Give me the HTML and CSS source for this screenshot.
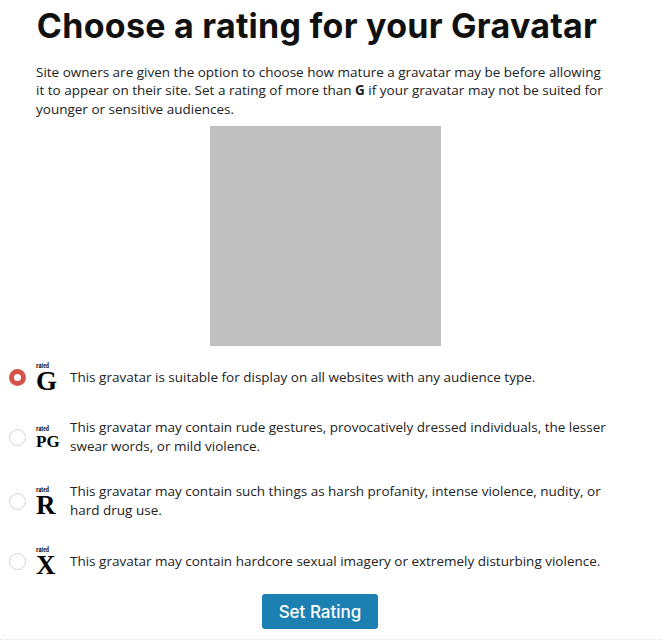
FILE: index.html
```html
<!DOCTYPE html>
<html>
<head>
<meta charset="utf-8">
<link rel="stylesheet" href="styles.css">
</head>
<body>
<div class="page">
  <h1 class="title">Choose a rating for your Gravatar</h1>
  <p class="intro">Site owners are given the option to choose how mature a gravatar may be before allowing it to appear on their site. Set a rating of more than <b>G</b> if your gravatar may not be suited for younger or sensitive audiences.</p>
  <div class="preview"></div>
  <div class="options">
    <label class="option">
      <span class="radio checked"></span>
      <span class="badge"><span class="rated">rated</span><span class="letter">G</span></span>
      <span class="desc">This gravatar is suitable for display on all websites with any audience type.</span>
    </label>
    <label class="option">
      <span class="radio"></span>
      <span class="badge"><span class="rated">rated</span><span class="letter small">PG</span></span>
      <span class="desc">This gravatar may contain rude gestures, provocatively dressed individuals, the lesser swear words, or mild violence.</span>
    </label>
    <label class="option">
      <span class="radio"></span>
      <span class="badge"><span class="rated">rated</span><span class="letter">R</span></span>
      <span class="desc">This gravatar may contain such things as harsh profanity, intense violence, nudity, or hard drug use.</span>
    </label>
    <label class="option">
      <span class="radio"></span>
      <span class="badge"><span class="rated">rated</span><span class="letter">X</span></span>
      <span class="desc">This gravatar may contain hardcore sexual imagery or extremely disturbing violence.</span>
    </label>
  </div>
  <div class="actions">
    <button class="btn">Set Rating</button>
  </div>
</div>
</body>
</html>
```
FILE: styles.css
```css
html, body {
  margin: 0;
  padding: 0;
  background: #fff;
}
body {
  font-family: "Open Sans", "Liberation Sans", sans-serif;
  color: #222;
}
.page {
  width: 662px;
  height: 640px;
  box-sizing: border-box;
  padding-top: 5px;
  overflow: hidden;
  border-bottom: 1px dotted #e6e6e6;
}
.title {
  margin: 0 0 0 32px;
  width: 570px;
  text-align: center;
  font-family: Inter, "Liberation Sans", sans-serif;
  font-weight: 700;
  font-size: 34px;
  line-height: 42px;
  letter-spacing: 0.25px;
  color: #111;
}
.intro {
  margin: 16px 0 0 36px;
  width: 568px;
  font-size: 13.5px;
  line-height: 18.4px;
  color: #222;
}
.intro b {
  display: inline-block;
  font-weight: 700;
  line-height: 18.4px;
}
.preview {
  width: 231px;
  height: 220px;
  margin: 8px 0 0 210px;
  background: #c0c0c0;
}
.options {
  margin: 16px 0 0 9px;
  display: flex;
  flex-direction: column;
  gap: 26px;
}
.option {
  display: flex;
  align-items: center;
}
.radio {
  flex: none;
  width: 17px;
  height: 17px;
  box-sizing: border-box;
  border-radius: 50%;
  border: 1px solid #d4d4d4;
  background: #fff;
  margin-right: 10px;
}
.radio.checked {
  border: 5px solid #d6534c;
  background: #fff;
}
.badge {
  flex: none;
  width: 24px;
  display: flex;
  flex-direction: column;
  align-items: flex-start;
  font-family: "Liberation Serif", serif;
  font-weight: 700;
  color: #000;
  margin-right: 10px;
}
.rated {
  font-size: 7.5px;
  line-height: 7px;
  transform: scaleX(0.75);
  transform-origin: left center;
}
.letter {
  font-size: 27px;
  line-height: 22px;
  margin-top: 1px;
}
.letter.small {
  font-size: 17px;
  line-height: 16px;
  margin-top: 2px;
}
.desc {
  width: 540px;
  font-size: 13.5px;
  line-height: 19px;
  color: #222;
}
.actions {
  display: flex;
  justify-content: center;
  margin-top: 18px;
}
.btn {
  width: 116px;
  height: 35px;
  border: none;
  border-radius: 3px;
  background: #1d80b3;
  color: #fff;
  font-family: Inter, "Liberation Sans", sans-serif;
  font-size: 17px;
  font-weight: 500;
  cursor: pointer;
  margin-left: -22px;
}
```
